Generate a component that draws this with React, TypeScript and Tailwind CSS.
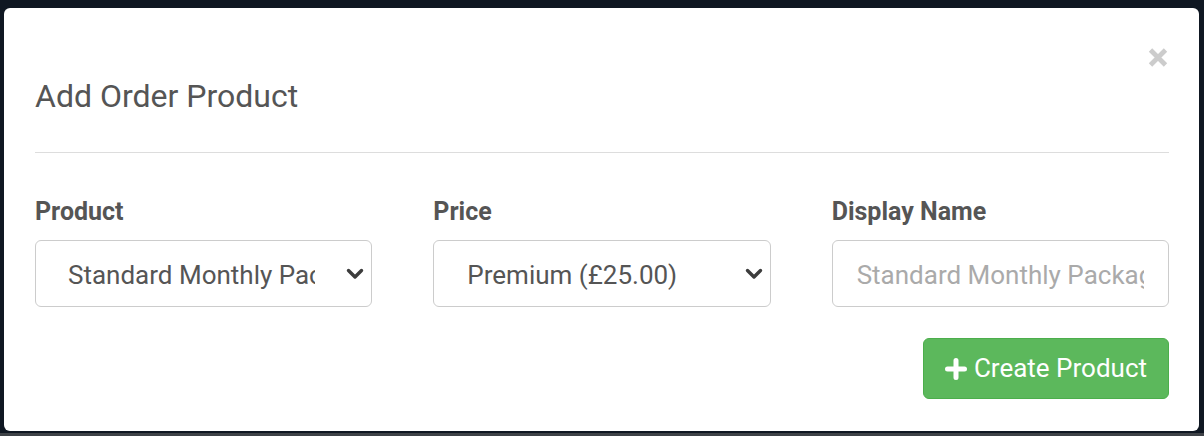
export default function App() {
	return (
		<div className="flex h-[436px] w-[1204px] flex-col overflow-hidden bg-[#0f1722] pt-[8px] font-['Roboto',sans-serif]">
			{/* Modal window */}
			<div className="ml-[4px] flex w-[1195px] flex-col rounded-[6px] bg-white">
				{/* Header */}
				<div className="ml-[31px] mr-[30px] flex items-start justify-between border-b border-[#dddddd] pb-[36px] pt-[40px]">
					<h4 className="mt-[28px] text-[32px] leading-[40px] text-[#555555]">
						Add Order Product
					</h4>
					<button className="mr-[1px] mt-[-1px] h-[21px] w-[20px]" aria-label="Close">
						<svg viewBox="0 0 20 21" className="h-[21px] w-[20px]">
							<path
								d="M2.5 3 L17.5 18 M17.5 3 L2.5 18"
								stroke="#cccccc"
								strokeWidth="4.8"
								strokeLinecap="butt"
								fill="none"
							/>
						</svg>
					</button>
				</div>

				{/* Body */}
				<div className="pb-[32px] pl-[31px] pr-[30px] pt-[44px]">
					<div className="grid grid-cols-3 gap-x-[61px]">
						<div>
							<label className="mb-[13px] block text-[25px] font-bold leading-[30px] text-[#555555]">
								Product
							</label>
							<div className="relative">
								<select className="h-[67px] w-full appearance-none overflow-hidden whitespace-nowrap rounded-[6px] border border-[#cccccc] bg-white pl-[32px] pr-[56px] pt-[3px] text-[26px] text-[#555555] outline-none">
									<option>Standard Monthly Package</option>
								</select>
								<Chevron />
							</div>
						</div>
						<div>
							<label className="mb-[13px] block text-[25px] font-bold leading-[30px] text-[#555555]">
								Price
							</label>
							<div className="relative">
								<select className="h-[67px] w-full appearance-none overflow-hidden whitespace-nowrap rounded-[6px] border border-[#cccccc] bg-white pl-[33px] pr-[56px] pt-[3px] text-[26px] text-[#555555] outline-none">
									<option>Premium (£25.00)</option>
								</select>
								<Chevron />
							</div>
						</div>
						<div>
							<label className="mb-[13px] block text-[25px] font-bold leading-[30px] text-[#555555]">
								Display Name
							</label>
							<input
								className="h-[67px] w-full rounded-[6px] border border-[#cccccc] bg-white px-[24px] pt-[3px] text-[26px] text-[#555555] outline-none placeholder:text-[#aaaaaa]"
								placeholder="Standard Monthly Package"
							/>
						</div>
					</div>

					<div className="mt-[31px] flex justify-end">
						<button className="flex h-[61px] items-center gap-[7px] rounded-[6px] border border-[#4cae4c] bg-[#5cb85c] pl-[21px] pr-[21px] text-[26px] text-white">
							<svg viewBox="0 0 22 22" className="h-[22px] w-[22px]">
								<path
									d="M11 2.5 V19.5 M2.5 11 H19.5"
									stroke="white"
									strokeWidth="5"
									strokeLinecap="round"
									fill="none"
								/>
							</svg>
							<span>Create Product</span>
						</button>
					</div>
				</div>
			</div>
			<div className="mt-[2px] h-[3px] w-full bg-[#3e4247]" />
		</div>
	);
}

function Chevron() {
	return (
		<svg
			viewBox="0 0 18 12"
			className="pointer-events-none absolute right-[8px] top-1/2 h-[12px] w-[18px] -translate-y-1/2"
		>
			<path
				d="M2.5 2.5 L9 9 L15.5 2.5"
				stroke="#3c3c3c"
				strokeWidth="3.4"
				strokeLinecap="round"
				strokeLinejoin="round"
				fill="none"
			/>
		</svg>
	);
}
